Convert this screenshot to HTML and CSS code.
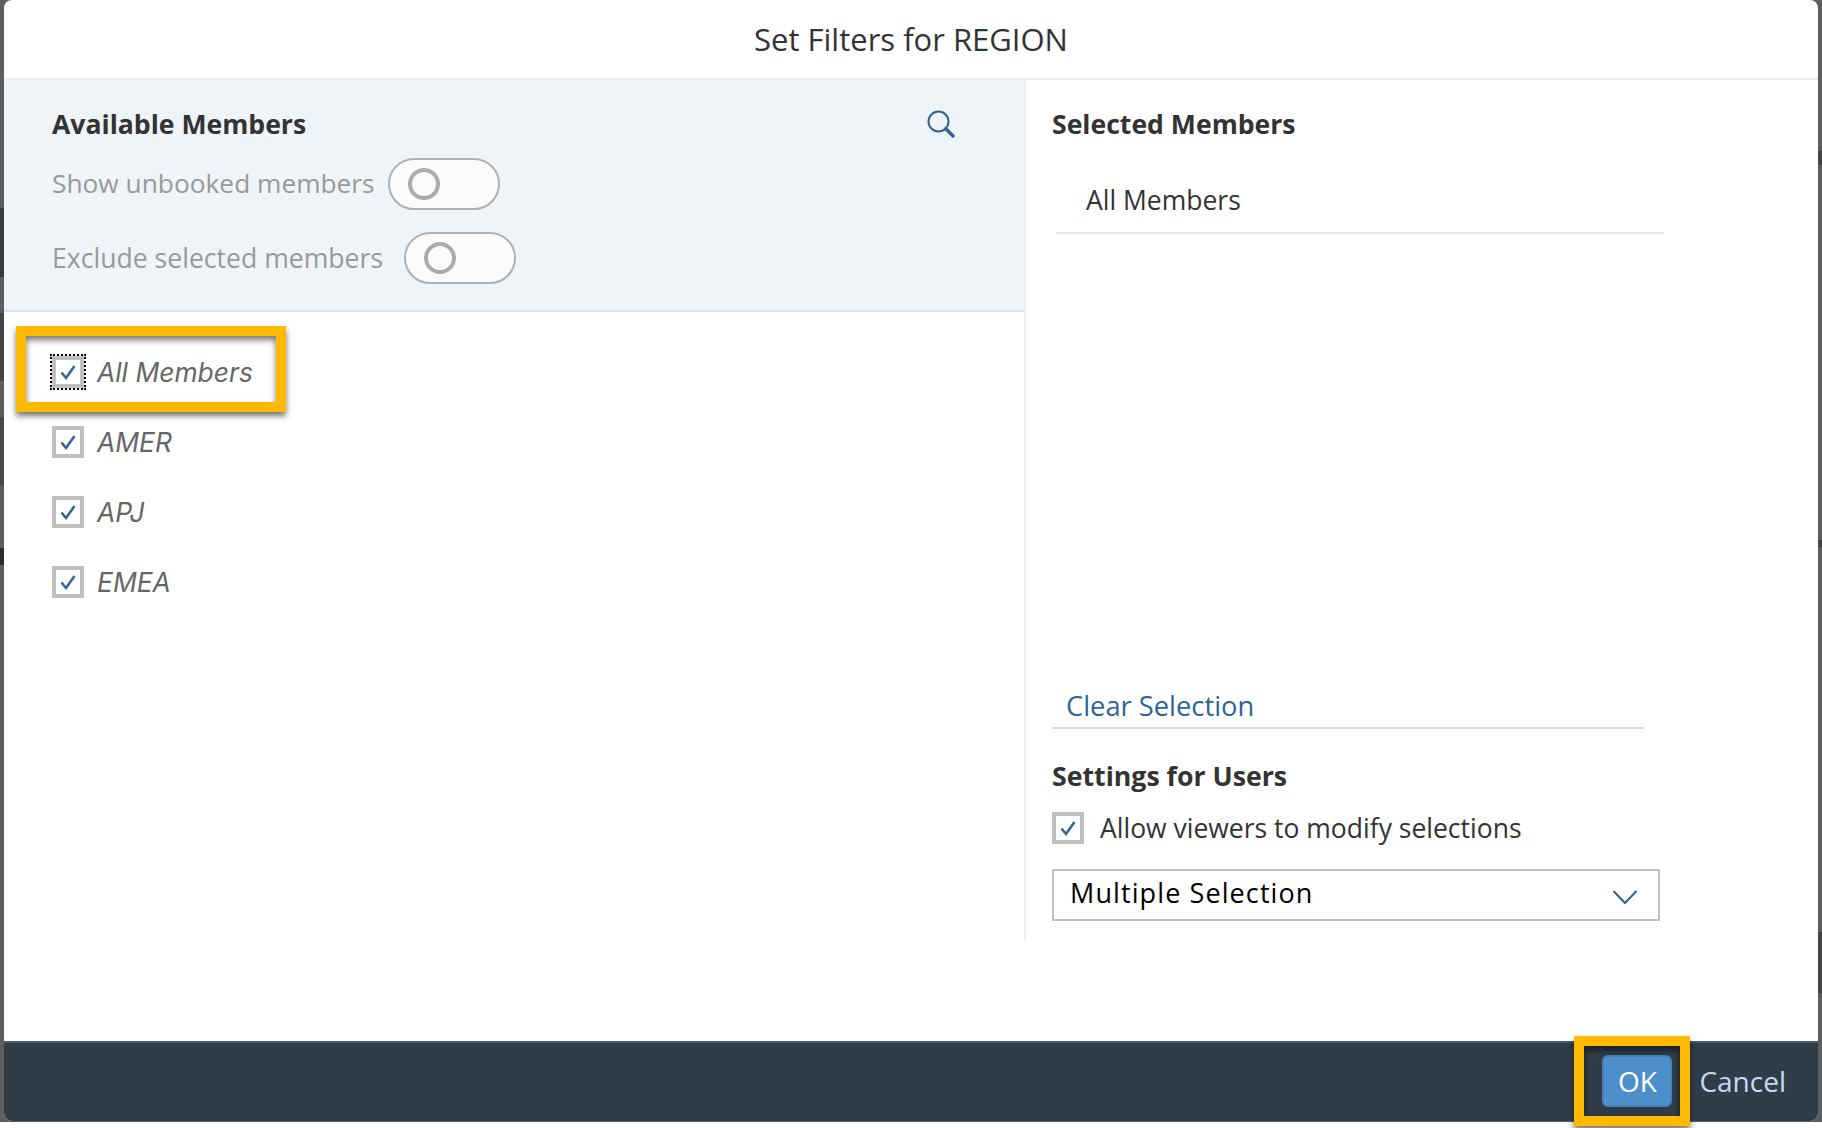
FILE: index.html
```html
<!DOCTYPE html>
<html lang="en">
<head>
<meta charset="utf-8">
<title>Set Filters for REGION</title>
<link rel="stylesheet" href="styles.css">
</head>
<body>
<div class="backdrop">
<div class="dialog">
  <header class="title">Set Filters for REGION</header>
  <main class="content">
    <section class="available">
      <div class="panel">
        <div class="panel-head">
          <h2 class="heading">Available Members</h2>
          <svg class="search" viewBox="0 0 28 28" width="28" height="28"><circle cx="11.5" cy="11.5" r="10" fill="none" stroke="#2f6497" stroke-width="2"/><path d="M18.8 18.8L26 26" stroke="#2f6497" stroke-width="3.4" stroke-linecap="round"/></svg>
        </div>
        <div class="toggle-row first"><span class="toggle-label">Show unbooked members</span><span class="toggle"><span class="knob"></span></span></div>
        <div class="toggle-row wide"><span class="toggle-label">Exclude selected members</span><span class="toggle"><span class="knob"></span></span></div>
      </div>
      <ul class="members">
        <li class="member"><span class="check focused"><svg viewBox="0 0 24 24" width="24" height="24"><path d="M5.5 12.5L10 18L18.5 6" class="tick"/></svg></span><span class="member-name">All Members</span></li>
        <li class="member"><span class="check"><svg viewBox="0 0 24 24" width="24" height="24"><path d="M5.5 12.5L10 18L18.5 6" class="tick"/></svg></span><span class="member-name">AMER</span></li>
        <li class="member"><span class="check"><svg viewBox="0 0 24 24" width="24" height="24"><path d="M5.5 12.5L10 18L18.5 6" class="tick"/></svg></span><span class="member-name">APJ</span></li>
        <li class="member"><span class="check"><svg viewBox="0 0 24 24" width="24" height="24"><path d="M5.5 12.5L10 18L18.5 6" class="tick"/></svg></span><span class="member-name">EMEA</span></li>
      </ul>
    </section>
    <section class="selected">
      <h2 class="heading">Selected Members</h2>
      <div class="selected-row">All Members</div>
      <div class="clear-row"><a class="clear-link">Clear Selection</a></div>
      <h3 class="heading settings">Settings for Users</h3>
      <div class="allow-row"><span class="check"><svg viewBox="0 0 24 24" width="24" height="24"><path d="M5.5 12.5L10 18L18.5 6" class="tick"/></svg></span><span class="allow-label">Allow viewers to modify selections</span></div>
      <div class="select"><span class="select-text">Multiple Selection</span><svg class="chevron" viewBox="0 0 26 16" width="26" height="16"><path d="M1.5 2L13 14L24.5 2" fill="none" stroke="#2f6497" stroke-width="2"/></svg></div>
    </section>
  </main>
  <footer class="footer">
    <button class="btn-ok">OK</button>
    <button class="btn-cancel">Cancel</button>
  </footer>
  <div class="callout callout-members"></div>
  <div class="callout callout-ok"></div>
</div>
</div>
</body>
</html>
```
FILE: styles.css
```css
* { box-sizing: border-box; }
html, body { margin: 0; padding: 0; height: 1128px; background: #fff; }
body {
  font-family: "Open Sans", "Noto Sans", sans-serif;
  color: #333;
}
.backdrop {
  height: 1122px;
  padding-left: 4px;
  background-color: #5e5e5e;
  background-image:
    linear-gradient(to bottom, #5e5e5e 208px, #3a3a3a 208px, #3a3a3a 277px, #5e5e5e 277px, #5e5e5e 313px, #444 313px, #444 381px, #5e5e5e 381px, #5e5e5e 417px, #484848 417px, #484848 485px, #5e5e5e 485px, #5e5e5e 548px, #2b2b2b 548px, #2b2b2b 565px, #5e5e5e 565px),
    linear-gradient(to bottom, #5e5e5e 151px, #444 151px, #444 165px, #5e5e5e 165px, #5e5e5e 540px, #444 540px, #444 547px, #5e5e5e 547px, #5e5e5e 932px, #444 932px, #444 993px, #5e5e5e 993px);
  background-size: 4px 100%, 4px 100%;
  background-position: left top, right top;
  background-repeat: no-repeat;
}
.dialog {
  position: relative;
  width: 1814px;
  height: 1121px;
  background: #fff;
  border-radius: 8px;
  display: flex;
  flex-direction: column;
}
.title {
  height: 80px;
  border-bottom: 2px solid #eceeef;
  display: flex;
  align-items: center;
  justify-content: center;
  font-size: 31px;
  color: #333;
}
.content {
  height: 861px;
  display: flex;
}
.available {
  width: 1022px;
  border-right: 2px solid #eceeef;
}
.panel {
  height: 232px;
  background: #eff4f8;
  border-bottom: 2px solid #d6e2ee;
  padding: 26px 0 0 48px;
}
.panel-head {
  display: flex;
  justify-content: space-between;
  align-items: center;
  padding-right: 69px;
}
.heading {
  margin: 0;
  font-size: 26.6px;
  line-height: 36px;
  font-weight: 700;
  color: #333;
}
.search { display: block; }
.toggle-row {
  display: flex;
  align-items: center;
  gap: 13px;
  margin-top: 22px;
  height: 52px;
}
.toggle-row.first { margin-top: 16px; }
.toggle-row.wide { gap: 21px; }
.toggle-row.wide .toggle-label { font-size: 26.6px; padding-bottom: 0; }
.toggle-label { font-size: 26.3px; color: #999; line-height: 50px; padding-bottom: 2px; }
.toggle {
  width: 112px;
  height: 52px;
  border: 2px solid #b0b0b0;
  border-radius: 26px;
  background: #fbfbfb;
  display: flex;
  align-items: center;
  padding-left: 18px;
}
.knob {
  width: 32px;
  height: 32px;
  border: 4px solid #ababab;
  border-radius: 50%;
}
.members {
  list-style: none;
  margin: 0;
  padding: 25px 0 0 48px;
}
.member {
  height: 70px;
  display: flex;
  align-items: center;
  gap: 13px;
}
.check {
  width: 32px;
  height: 32px;
  flex: none;
  border: 4px solid #bfbfbf;
  background: #fff;
  display: flex;
  align-items: center;
  justify-content: center;
}
.check svg { display: block; }
.check.focused { outline: 2px dotted #000; outline-offset: 0; }
.tick { fill: none; stroke: #2f6497; stroke-width: 2.5; }
.member-name { font-family: Inter, "Open Sans", sans-serif; font-size: 26.4px; font-style: italic; color: #666; }
.selected {
  flex: 1;
  padding: 26px 0 20px 26px;
  display: flex;
  flex-direction: column;
}
.selected-row {
  width: 608px;
  margin: 16px 0 0 4px;
  height: 76px;
  border-bottom: 2px solid #e3e5e8;
  padding: 10px 0 0 30px;
  display: flex;
  align-items: center;
  font-size: 26.5px;
  color: #333;
}
.clear-row {
  width: 592px;
  margin-top: auto;
  height: 50px;
  border-bottom: 2px solid #d9dcdf;
  padding: 4px 0 0 14px;
  display: flex;
  align-items: center;
}
.clear-link { font-size: 27.3px; color: #2f6497; }
.settings { margin-top: 29px; font-size: 26.7px; }
.allow-row {
  display: flex;
  align-items: center;
  gap: 16px;
  margin-top: 18px;
  height: 32px;
}
.allow-label { font-size: 26.5px; color: #333; }
.select {
  width: 608px;
  height: 52px;
  margin-top: 25px;
  border: 2px solid #bfbfbf;
  display: flex;
  align-items: center;
  justify-content: space-between;
  padding: 0 20px 0 16px;
}
.select-text { font-size: 27px; line-height: 44px; padding-bottom: 4px; color: #000; letter-spacing: 1.1px; }
.chevron { display: block; margin-top: 4px; }
.footer {
  margin-top: auto;
  height: 80px;
  background: #303c48;
  border-top: 2px solid #475a6b;
  border-radius: 0 0 8px 8px;
  display: flex;
  justify-content: flex-end;
  align-items: center;
  gap: 27px;
  padding: 0 32px 2px 0;
}
.btn-ok {
  width: 70px;
  height: 52px;
  border: 2px solid #4681b8;
  border-radius: 6px;
  background: #4d8fcb;
  color: #fff;
  font: 28px/1 "Open Sans", "Noto Sans", sans-serif;
  padding: 0;
}
.btn-cancel {
  background: none;
  border: 0;
  padding: 0;
  color: #c3dcf3;
  font: 28px/1 "Open Sans", "Noto Sans", sans-serif;
}
.callout {
  position: absolute;
  border: 10px solid #ffb900;
  box-shadow: 0 4px 6px rgba(0,0,0,.55), inset 0 4px 6px rgba(0,0,0,.55);
  pointer-events: none;
}
.callout-members { left: 12px; top: 326px; width: 270px; height: 86px; }
.callout-ok { left: 1570px; top: 1036px; width: 116px; height: 90px; }
```
